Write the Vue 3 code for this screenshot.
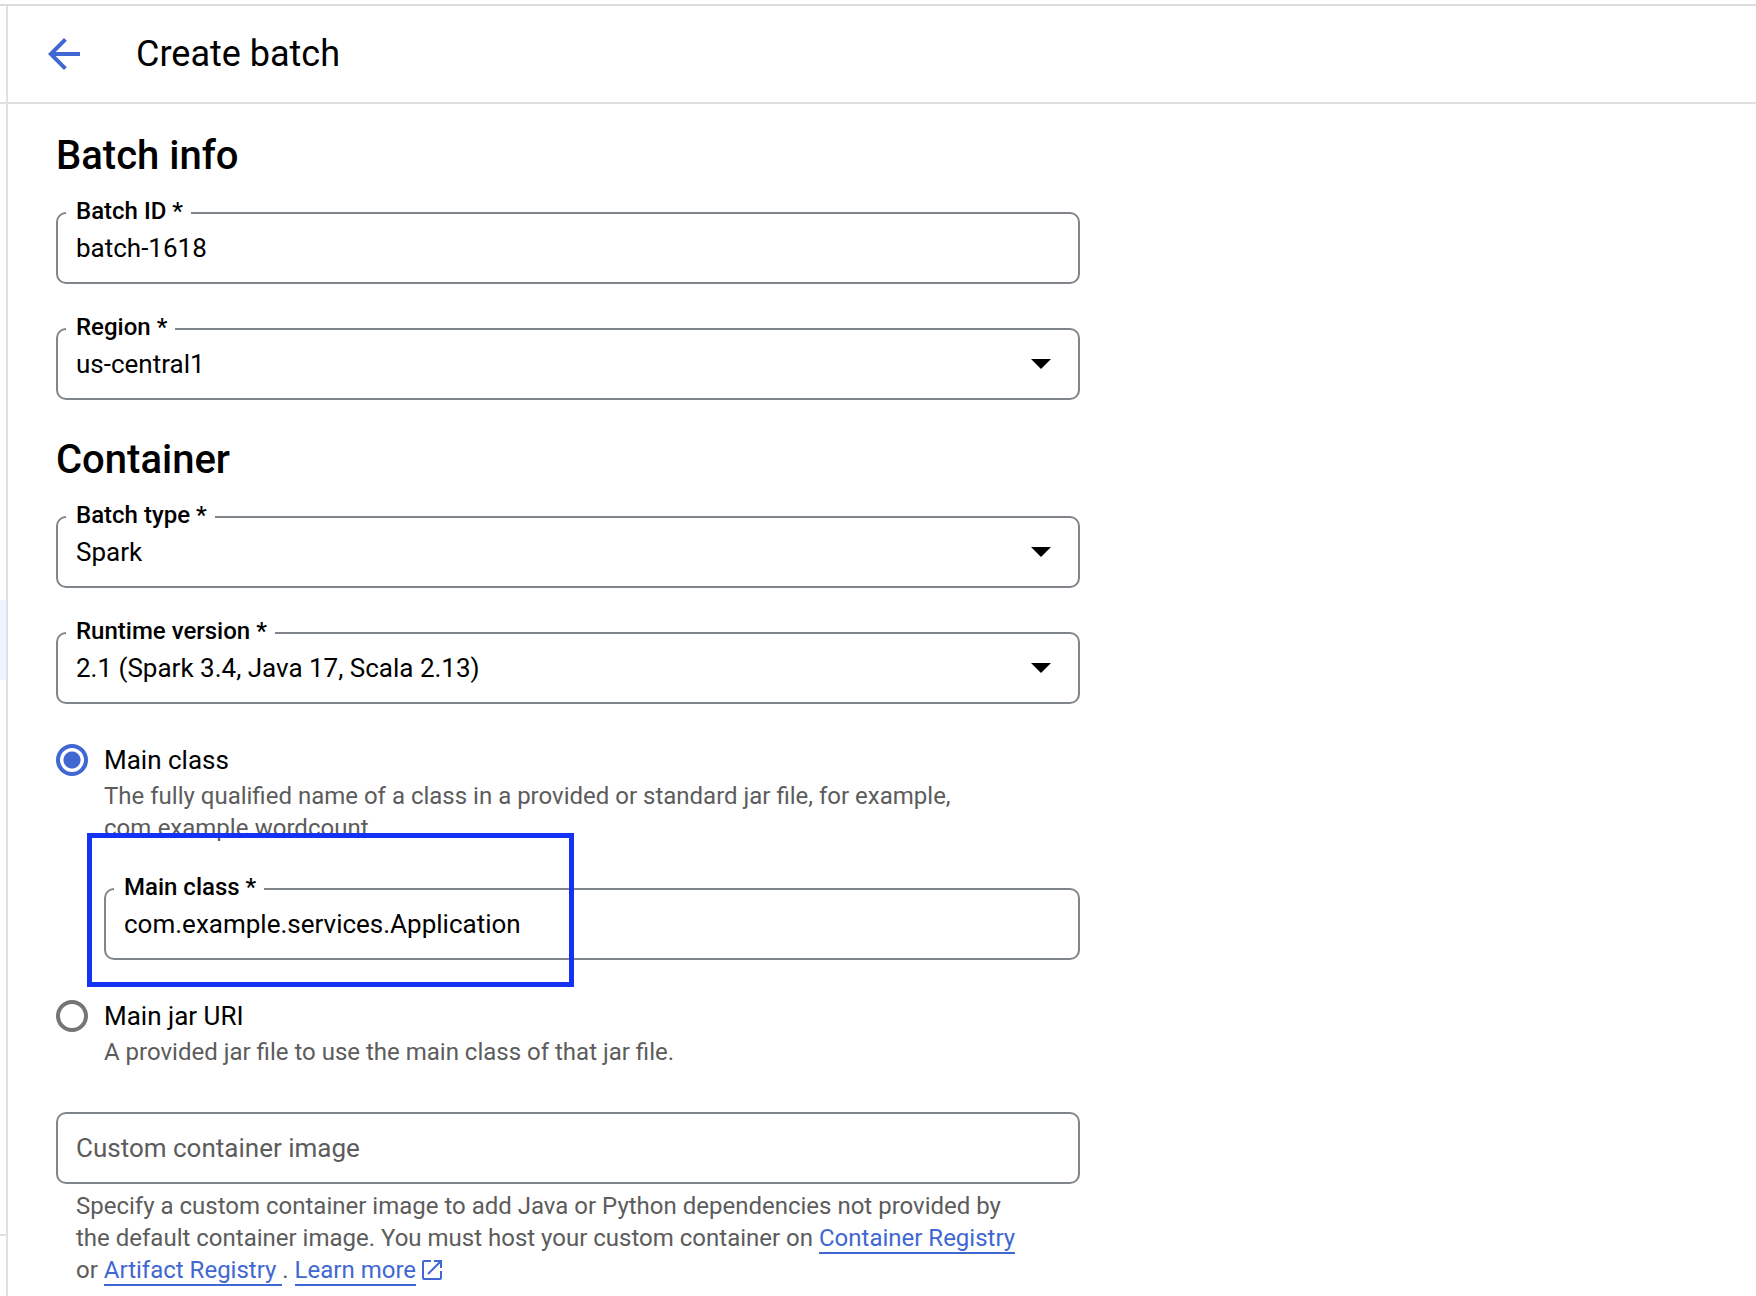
<script setup>
import { ref } from 'vue'

const batchId = ref('batch-1618')
const region = ref('us-central1')
const batchType = ref('Spark')
const runtime = ref('2.1 (Spark 3.4, Java 17, Scala 2.13)')
const entry = ref('class')
const mainClass = ref('com.example.services.Application')
const containerImage = ref('')
</script>

<template>
  <div class="page">
    <aside class="rail">
      <div class="rail-head"></div>
      <div class="rail-body">
        <div class="rail-active"></div>
      </div>
      <div class="rail-foot"></div>
    </aside>

    <div class="main">
      <header class="topbar">
        <button class="back" type="button" aria-label="Back">
          <svg viewBox="0 0 24 24" width="48" height="48" aria-hidden="true">
            <path fill="currentColor" d="M20 11H7.83l5.59-5.59L12 4l-8 8 8 8 1.41-1.41L7.83 13H20v-2z" />
          </svg>
        </button>
        <h1>Create batch</h1>
      </header>

      <form class="form" @submit.prevent>
        <h2>Batch info</h2>
        <div class="stack">
          <div class="field">
            <input id="batch-id" v-model="batchId" class="control" type="text" />
            <label class="float" for="batch-id">Batch ID *</label>
          </div>
          <div class="field">
            <select id="region" v-model="region" class="control">
              <option>us-central1</option>
            </select>
            <label class="float" for="region">Region *</label>
            <svg class="caret" viewBox="0 0 20 10" width="20" height="10" aria-hidden="true"><path d="M0 0h20L10 10z" /></svg>
          </div>
        </div>

        <h2>Container</h2>
        <div class="stack">
          <div class="field">
            <select id="batch-type" v-model="batchType" class="control">
              <option>Spark</option>
            </select>
            <label class="float" for="batch-type">Batch type *</label>
            <svg class="caret" viewBox="0 0 20 10" width="20" height="10" aria-hidden="true"><path d="M0 0h20L10 10z" /></svg>
          </div>
          <div class="field">
            <select id="runtime" v-model="runtime" class="control">
              <option>2.1 (Spark 3.4, Java 17, Scala 2.13)</option>
            </select>
            <label class="float" for="runtime">Runtime version *</label>
            <svg class="caret" viewBox="0 0 20 10" width="20" height="10" aria-hidden="true"><path d="M0 0h20L10 10z" /></svg>
          </div>
        </div>

        <div class="choice">
          <input id="entry-class" v-model="entry" class="radio" type="radio" name="entry" value="class" />
          <div class="choice-body">
            <label class="choice-label" for="entry-class">Main class</label>
            <p class="hint">The fully qualified name of a class in a provided or standard jar file, for example, com.example.wordcount.</p>
            <div class="field nested">
              <input id="main-class" v-model="mainClass" class="control" type="text" />
              <label class="float" for="main-class">Main class *</label>
              <div class="highlight"></div>
            </div>
          </div>
        </div>

        <div class="choice">
          <input id="entry-jar" v-model="entry" class="radio" type="radio" name="entry" value="jar" />
          <div class="choice-body">
            <label class="choice-label" for="entry-jar">Main jar URI</label>
            <p class="hint">A provided jar file to use the main class of that jar file.</p>
          </div>
        </div>

        <div class="field image-field">
          <input
            id="container-image"
            v-model="containerImage"
            class="control"
            type="text"
            placeholder="Custom container image"
            aria-label="Custom container image"
            aria-describedby="image-help"
          />
        </div>
        <p id="image-help" class="hint help">
          Specify a custom container image to add Java or Python dependencies not provided by the default container image. You must host your custom container on <a href="#">Container Registry</a> or <a href="#">Artifact Registry </a>. <a href="#">Learn more</a>
          <svg class="external" viewBox="0 0 20 20" width="20" height="20" aria-hidden="true">
            <path fill="none" stroke="currentColor" stroke-width="2" d="M9 1H2Q1 1 1 2V18Q1 19 2 19H18Q19 19 19 18V11M12 1H19V8M19 1L6 14" />
          </svg>
        </p>
      </form>
    </div>
  </div>
</template>

<style>
body {
  margin: 0;
  background: #fff;
}
</style>

<style scoped>
.page {
  --blue: #4067d2;
  --line: #dfe0e2;
  --outline: #80868b;
  --muted: #5c5c5c;
  box-sizing: border-box;
  display: flex;
  min-height: 100vh;
  padding-top: 4px;
  font-family: Roboto, sans-serif;
  color: #000;
}

.rail {
  flex: none;
  display: flex;
  flex-direction: column;
  width: 6px;
  border-top: 2px solid #dadce0;
}
.rail-head {
  height: 96px;
  border-bottom: 2px solid var(--line);
}
.rail-body {
  flex: 1;
  padding-top: 496px;
}
.rail-active {
  height: 80px;
  background: #f0f4ff;
}
.rail-foot {
  height: 60px;
  border-top: 2px solid var(--line);
}

.main {
  flex: 1;
  border-top: 2px solid #dadce0;
  box-shadow: inset 2px 0 var(--line);
}
.topbar {
  display: flex;
  align-items: center;
  gap: 48px;
  height: 96px;
  padding-left: 34px;
  border-bottom: 2px solid var(--line);
}
.back {
  display: flex;
  padding: 0;
  border: 0;
  background: none;
  color: var(--blue);
  cursor: pointer;
}
h1 {
  margin: 0;
  font-size: 36px;
  line-height: 48px;
  font-weight: 400;
}

.form {
  box-sizing: border-box;
  max-width: 1074px;
  padding: 28px 0 0 50px;
}
h2 {
  margin: 0 0 32px;
  font-size: 40px;
  line-height: 48px;
  font-weight: 500;
}
.stack {
  display: flex;
  flex-direction: column;
  gap: 44px;
  margin-bottom: 36px;
}

.field {
  position: relative;
}
.control {
  appearance: none;
  box-sizing: border-box;
  display: block;
  width: 100%;
  height: 72px;
  padding: 0 18px;
  border: 2px solid var(--outline);
  border-radius: 10px;
  background: #fff;
  color: #000;
  font-family: inherit;
  font-size: 26px;
  outline-color: var(--blue);
}
.control::placeholder {
  color: var(--muted);
  opacity: 1;
}
.float {
  position: absolute;
  top: -15px;
  left: 10px;
  padding: 0 8px 0 10px;
  background: #fff;
  font-size: 24px;
  line-height: 28px;
  font-weight: 500;
}
.caret {
  position: absolute;
  top: 31px;
  right: 29px;
  pointer-events: none;
}

.choice {
  display: flex;
  gap: 16px;
}
.radio {
  appearance: none;
  box-sizing: border-box;
  flex: none;
  width: 32px;
  height: 32px;
  margin: 4px 0 0;
  border: 4px solid #757575;
  border-radius: 50%;
}
.radio:checked {
  border-color: var(--blue);
  background: radial-gradient(circle, var(--blue) 8px, transparent 9px);
}
.choice-body {
  flex: 1;
}
.choice-label {
  display: block;
  font-size: 26px;
  line-height: 40px;
}
.hint {
  max-width: 880px;
  margin: 0;
  color: var(--muted);
  font-size: 24px;
  line-height: 32px;
}
.nested {
  margin: 44px 0 36px;
}
.highlight {
  position: absolute;
  top: -55px;
  left: -17px;
  box-sizing: border-box;
  width: 487px;
  height: 154px;
  border: 5px solid #1432f5;
  pointer-events: none;
}

.image-field {
  margin-top: 44px;
}
.help {
  max-width: 960px;
  padding: 6px 0 8px 20px;
}
a {
  border-bottom: 2px solid var(--blue);
  color: var(--blue);
  text-decoration: none;
}
.external {
  margin-left: 6px;
  color: var(--blue);
  vertical-align: -2px;
}
</style>
